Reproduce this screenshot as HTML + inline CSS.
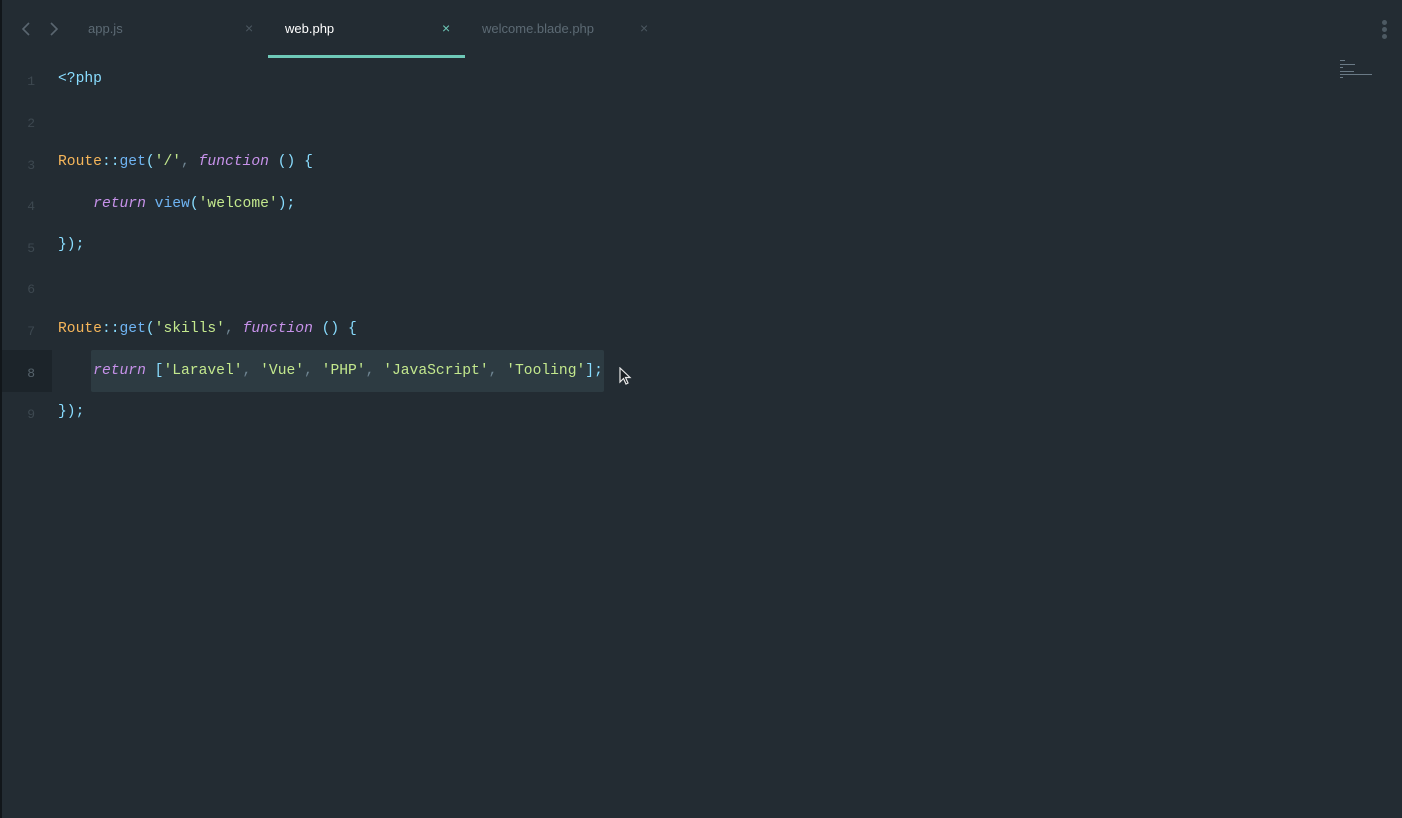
<!DOCTYPE html>
<html><head><meta charset="utf-8"><style>
html,body{margin:0;padding:0;width:1402px;height:818px;overflow:hidden;background:#232c33;}
body{position:relative;font-family:"Liberation Sans",sans-serif;}
.edge{position:absolute;left:0;top:0;width:2px;height:818px;background:#11161a;}
.tab{position:absolute;top:21px;font-size:13px;}
.x{position:absolute;top:20px;font-size:14px;}
.code{position:absolute;left:0;top:4px;font-family:"Liberation Mono",monospace;font-size:14.65px;}
.ln{position:absolute;left:0;width:35px;text-align:right;color:#3d4850;font-size:13px;}
.l{position:absolute;left:58px;white-space:pre;color:#89ddff;}
.o{color:#f6b65a}.b{color:#6fb4f3}.s{color:#c3e88d}.k{color:#c792ea;font-style:italic}.c{color:#89ddff}.p{color:#6f8592}
.mm{position:absolute;height:1px;background:#6a7a86;}
</style></head><body>
<div class="edge"></div>
<svg style="position:absolute;left:18px;top:21px" width="44" height="16"><path d="M11 2 L5 8 L11 14" fill="none" stroke="#5a6670" stroke-width="1.6"/><path d="M33 2 L39 8 L33 14" fill="none" stroke="#5a6670" stroke-width="1.6"/></svg>
<div class="tab" style="left:88px;color:#5c6a74">app.js</div>
<div class="x" style="left:245px;color:#4b5760">×</div>
<div class="tab" style="left:285px;color:#ffffff">web.php</div>
<div class="x" style="left:442px;color:#6ec9b8">×</div>
<div style="position:absolute;left:268px;top:55px;width:197px;height:3px;background:#6ec9b8"></div>
<div class="tab" style="left:482px;color:#5c6a74">welcome.blade.php</div>
<div class="x" style="left:640px;color:#4b5760">×</div>
<div style="position:absolute;left:1382px;top:20px;width:5px;"><div style="width:5px;height:5px;border-radius:3px;background:#4d5a63;margin-bottom:2px"></div><div style="width:5px;height:5px;border-radius:3px;background:#4d5a63;margin-bottom:2px"></div><div style="width:5px;height:5px;border-radius:3px;background:#4d5a63"></div></div>
<div class="mm" style="left:1340px;top:60px;width:5px"></div>
<div class="mm" style="left:1340px;top:64px;width:15px"></div>
<div class="mm" style="left:1340px;top:67px;width:3px"></div>
<div class="mm" style="left:1340px;top:71px;width:14px"></div>
<div class="mm" style="left:1340px;top:74px;width:32px"></div>
<div class="mm" style="left:1340px;top:77px;width:3px"></div>
<div style="position:absolute;left:2px;top:350px;width:50px;height:42px;background:#1c242a"></div>
<div style="position:absolute;left:91px;top:350px;width:513px;height:42px;background:#2d3b42;border-radius:2px"></div>
<div class="code">
<div class="ln" style="top:70px">1</div><div class="l" style="top:67px">&lt;?php</div>
<div class="ln" style="top:112px">2</div>
<div class="ln" style="top:154px">3</div><div class="l" style="top:150px"><span class="o">Route</span>::<span class="b">get</span>(<span class="s">'/'</span><span class="p">,</span> <span class="k">function</span> () {</div>
<div class="ln" style="top:195px">4</div><div class="l" style="top:192px">    <span class="k">return</span> <span class="b">view</span>(<span class="s">'welcome'</span>);</div>
<div class="ln" style="top:237px">5</div><div class="l" style="top:233px">});</div>
<div class="ln" style="top:278px">6</div>
<div class="ln" style="top:320px">7</div><div class="l" style="top:317px"><span class="o">Route</span>::<span class="b">get</span>(<span class="s">'skills'</span><span class="p">,</span> <span class="k">function</span> () {</div>
<div class="ln" style="top:362px;color:#56636c">8</div><div class="l" style="top:359px">    <span class="k">return</span> [<span class="s">'Laravel'</span><span class="p">,</span> <span class="s">'Vue'</span><span class="p">,</span> <span class="s">'PHP'</span><span class="p">,</span> <span class="s">'JavaScript'</span><span class="p">,</span> <span class="s">'Tooling'</span>];</div>
<div class="ln" style="top:403px">9</div><div class="l" style="top:400px">});</div>
</div>
<svg style="position:absolute;left:619px;top:367px" width="14" height="20"><path d="M1 1 L1 15 L4.5 11.5 L7 17 L9 16 L6.5 10.5 L11 10.5 Z" fill="#1a1f23" stroke="#e8e8e8" stroke-width="1.2"/></svg>
</body></html>
